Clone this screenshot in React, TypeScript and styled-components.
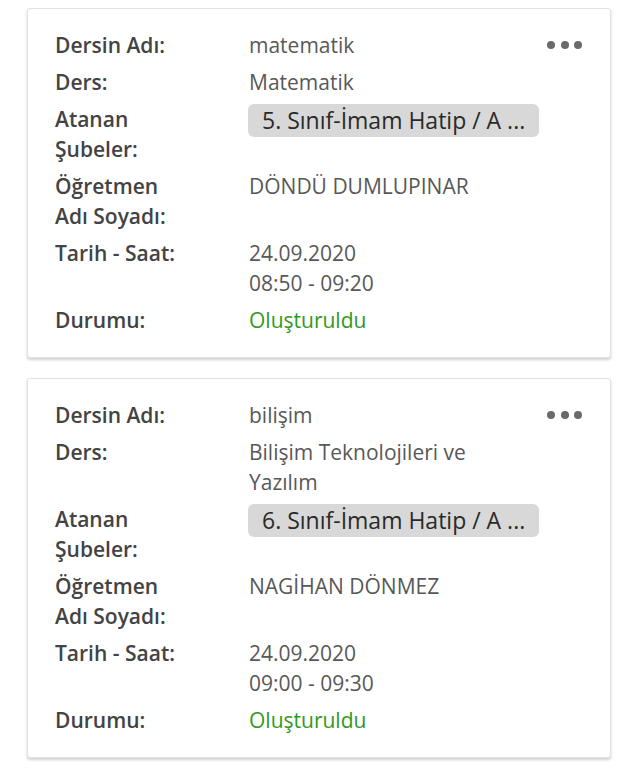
import React from "react";
import styled, { createGlobalStyle } from "styled-components";

const Global = createGlobalStyle`
  html, body { margin: 0; padding: 0; background: #ffffff; }
  body { font-family: "Open Sans", "Noto Sans", sans-serif; }
`;

const Page = styled.div`
  padding: 8px 27px 8px 27px;
  display: flex;
  flex-direction: column;
  gap: 20px;
`;

const Card = styled.div`
  background: #fff;
  border: 1px solid #e2e2e2;
  border-radius: 3px;
  box-shadow: 0 2px 3px rgba(0, 0, 0, 0.18);
  padding: 21px 28px 22px 27px;
  display: flex;
  align-items: flex-start;
`;

const Fields = styled.div`
  display: grid;
  grid-template-columns: 194px 290px;
  row-gap: 7px;
  font-size: 21px;
  line-height: 30px;
`;

const Label = styled.div`
  font-weight: 600;
  color: #434343;
  width: 132px;
`;

const Value = styled.div<{ $status?: boolean }>`
  color: ${(p) => (p.$status ? "#2f9a1f" : "#585858")};
  max-width: 282px;
`;

const Chip = styled.div`
  background: #d8d8d8;
  border-radius: 6px;
  height: 33px;
  line-height: 33px;
  padding: 0 14px;
  color: #2a2a2a;
  font-size: 23px;
  white-space: nowrap;
  overflow: hidden;
  margin-left: -1px;
`;

const Dots = styled.div`
  margin-left: auto;
  display: flex;
  gap: 5.5px;
  padding-top: 11px;
`;

const Dot = styled.span`
  width: 8px;
  height: 8px;
  border-radius: 50%;
  background: #6a6a6a;
`;

type Item = {
  name: string;
  lesson: string;
  branch: string;
  teacher: string;
  date: string;
  time: string;
};

const items: Item[] = [
  {
    name: "matematik",
    lesson: "Matematik",
    branch: "5. Sınıf-İmam Hatip / A ...",
    teacher: "DÖNDÜ DUMLUPINAR",
    date: "24.09.2020",
    time: "08:50 - 09:20",
  },
  {
    name: "bilişim",
    lesson: "Bilişim Teknolojileri ve Yazılım",
    branch: "6. Sınıf-İmam Hatip / A ...",
    teacher: "NAGİHAN DÖNMEZ",
    date: "24.09.2020",
    time: "09:00 - 09:30",
  },
];

export default function App() {
  return (
    <>
      <Global />
      <Page>
        {items.map((it, i) => (
          <Card key={i}>
            <Fields>
              <Label>Dersin Adı:</Label>
              <Value>{it.name}</Value>
              <Label>Ders:</Label>
              <Value>{it.lesson}</Value>
              <Label>Atanan Şubeler:</Label>
              <div>
                <Chip>{it.branch}</Chip>
              </div>
              <Label>Öğretmen Adı Soyadı:</Label>
              <Value>{it.teacher}</Value>
              <Label>Tarih - Saat:</Label>
              <Value>
                {it.date}
                <br />
                {it.time}
              </Value>
              <Label>Durumu:</Label>
              <Value $status>Oluşturuldu</Value>
            </Fields>
            <Dots>
              <Dot />
              <Dot />
              <Dot />
            </Dots>
          </Card>
        ))}
      </Page>
    </>
  );
}
